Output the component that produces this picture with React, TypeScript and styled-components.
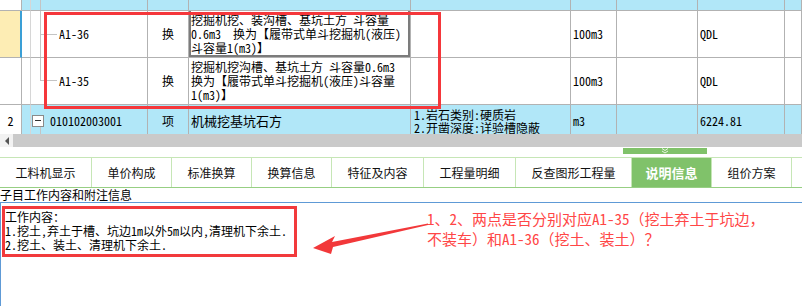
import React from "react";
import styled, { createGlobalStyle, css } from "styled-components";

const Global = createGlobalStyle`
  html, body { margin: 0; padding: 0; background: #fff; overflow: hidden; }
  body { font-family: "Noto Sans Mono CJK SC", "Noto Sans CJK SC", sans-serif; color: #000; }
`;

const Page = styled.div`
  position: relative;
  width: 802px;
  height: 306px;
  display: flex;
  flex-direction: column;
  overflow: hidden;
`;

const GridArea = styled.div`
  height: 134px;
  overflow: hidden;
  display: flex;
  flex-direction: column;
`;

const Row = styled.div<{ $h: number; $blue?: boolean }>`
  display: grid;
  grid-template-columns: 22px 9px 117px 41px 222px 160px 46px 81px 87px 1fr;
  height: ${(p) => p.$h}px;
  flex: none;
  background: ${(p) => (p.$blue ? "#b1e7f8" : "#fff")};
`;

const Cell = styled.div<{
  $bg?: string;
  $light?: boolean;
  $center?: boolean;
  $marker?: boolean;
  $selected?: boolean;
  $flush?: boolean;
  $top?: boolean;
}>`
  position: relative;
  box-sizing: border-box;
  border-right: 1px solid ${(p) => (p.$light ? "#d6d6d6" : "#b2b2b2")};
  border-bottom: 1px solid #b2b2b2;
  background: ${(p) => p.$bg || "transparent"};
  font-size: 12px;
  line-height: 14px;
  display: flex;
  align-items: center;
  padding-left: ${(p) => (p.$flush ? 0 : 2)}px;
  overflow: hidden;
  white-space: pre;
  ${(p) =>
    p.$top &&
    css`
      align-items: flex-start;
      padding-top: 3px;
      padding-left: 3px;
    `}
  ${(p) =>
    p.$center &&
    css`
      justify-content: center;
      padding-left: 0;
    `}
  ${(p) =>
    p.$marker &&
    css`
      border-right: 2px solid #3a9fd6;
    `}
  ${(p) =>
    p.$selected &&
    css`
      box-shadow: inset 2px 0 0 #7c7c7c, inset -2px 0 0 #7c7c7c, inset 0 -2px 0 #7c7c7c;
    `}
`;

const Lines = styled.div`
  display: flex;
  flex-direction: column;
  white-space: pre;
`;

const FeatureLine = styled.span`
  line-height: 13px;
`;

const CodeText = styled.span<{ $indent: number }>`
  padding-left: ${(p) => p.$indent}px;
`;

const NameText = styled.span<{ $size?: number }>`
  font-family: "Noto Sans CJK SC", sans-serif;
  font-size: ${(p) => p.$size || 12}px;
`;

/* decorative tree guide lines inside the code cell */
const TreeV = styled.span<{ $top: number; $bottom: number }>`
  position: absolute;
  left: 9px;
  top: ${(p) => p.$top}px;
  height: ${(p) => p.$bottom - p.$top}px;
  width: 1px;
  background: #c4c4c4;
`;

const TreeH = styled.span<{ $y: number }>`
  position: absolute;
  left: 10px;
  top: ${(p) => p.$y}px;
  width: 16px;
  height: 1px;
  background: #c4c4c4;
`;

const Toggle = styled.span`
  box-sizing: border-box;
  width: 12px;
  height: 12px;
  margin-left: 1px;
  margin-right: 6px;
  border: 1px solid #8a8a8a;
  background: #fff;
  display: inline-flex;
  align-items: center;
  justify-content: center;
  &::after {
    content: "";
    width: 6px;
    height: 1px;
    background: #333;
  }
`;

const Scrollbar = styled.div`
  height: 13px;
  flex: none;
  display: flex;
  background: #cacaca;
`;

const ScrollButton = styled.div`
  width: 13px;
  background: #f2f2f2;
  display: flex;
  align-items: center;
  justify-content: center;
  &::after {
    content: "";
    border-top: 4px solid transparent;
    border-bottom: 4px solid transparent;
    border-right: 4px solid #555;
  }
`;

const Splitter = styled.div`
  height: 10px;
  flex: none;
  padding-left: 623px;
`;

const SplitHandle = styled.div`
  width: 84px;
  height: 6px;
  margin-top: 1px;
  background: #80c26a;
  display: flex;
  justify-content: center;
  align-items: flex-start;
`;

const TabBar = styled.div`
  display: flex;
  height: 31px;
  flex: none;
  box-sizing: border-box;
  border-top: 1px solid #c6e6b6;
  border-bottom: 1px solid #97cf83;
`;

const Tab = styled.div<{ $w: number; $active?: boolean }>`
  box-sizing: border-box;
  width: ${(p) => p.$w}px;
  border-right: 1px solid #c6e6b6;
  display: flex;
  align-items: center;
  justify-content: center;
  font-family: "Noto Sans CJK SC", sans-serif;
  font-size: 12px;
  color: #111;
  ${(p) =>
    p.$active &&
    css`
      background: #80c26a;
      color: #fff;
      font-weight: 700;
      font-size: 13px;
    `}
`;

const PanelLabel = styled.div`
  height: 14px;
  flex: none;
  font-family: "Noto Sans CJK SC", sans-serif;
  font-size: 12px;
  line-height: 13px;
`;

const Panel = styled.div`
  flex: 1;
  border-top: 1px solid #5e9ad6;
  border-left: 1px solid #5e9ad6;
  display: flex;
  align-items: flex-start;
`;

const WorkBox = styled.div`
  margin: 3px 0 0 1px;
  width: 295px;
  box-sizing: border-box;
  border: 3px solid #f23a3c;
  padding: 1px 0 2px 0;
  font-family: "Noto Sans Mono CJK SC", "Noto Sans CJK SC", sans-serif;
  font-size: 12px;
  line-height: 14px;
  white-space: nowrap;
`;

const Note = styled.div`
  margin: 6px 0 0 130px;
  font-family: "Noto Sans Mono CJK SC", "Noto Sans CJK SC", sans-serif;
  font-size: 15px;
  line-height: 20px;
  color: #ff4646;
  white-space: nowrap;
`;

const HighlightBox = styled.div`
  position: absolute;
  left: 44px;
  top: 12px;
  width: 397px;
  height: 97px;
  box-sizing: border-box;
  border: 3px solid #f5373b;
  pointer-events: none;
`;

const ArrowSvg = styled.svg`
  position: absolute;
  left: 0;
  top: 0;
  pointer-events: none;
`;

type GridRow = {
  h: number;
  blue?: boolean;
  num?: string;
  numBg?: string;
  marker?: boolean;
  code?: React.ReactNode;
  type?: string;
  name?: string[];
  feature?: string[];
  unit?: string;
  src?: string;
  selected?: boolean;
};

const rows: GridRow[] = [
  { h: 11, blue: true, numBg: "#fff", code: <TreeV $top={0} $bottom={11} /> },
  {
    h: 47,
    numBg: "#fdedb4",
    marker: true,
    selected: true,
    code: (
      <>
        <TreeV $top={0} $bottom={47} />
        <TreeH $y={23} />
        <CodeText $indent={28}>A1-36</CodeText>
      </>
    ),
    type: "换",
    name: ["挖掘机挖、装沟槽、基坑土方 斗容量", "0.6m3  换为【履带式单斗挖掘机(液压)", "斗容量1(m3)】"],
    unit: "100m3",
    src: "QDL",
  },
  {
    h: 47,
    code: (
      <>
        <TreeV $top={0} $bottom={23} />
        <TreeH $y={22} />
        <CodeText $indent={28}>A1-35</CodeText>
      </>
    ),
    type: "换",
    name: ["挖掘机挖沟槽、基坑土方 斗容量0.6m3", "换为【履带式单斗挖掘机(液压)斗容量", "1(m3)】"],
    unit: "100m3",
    src: "QDL",
  },
  {
    h: 32,
    blue: true,
    num: "2",
    numBg: "#fff",
    code: (
      <>
        <TreeV $top={22} $bottom={32} />
        <Toggle />
        <span>010102003001</span>
      </>
    ),
    type: "项",
    name: ["机械挖基坑石方"],
    feature: ["1.岩石类别:硬质岩", "2.开凿深度:详验槽隐蔽"],
    unit: "m3",
    src: "6224.81",
  },
];

const tabs = [
  { t: "工料机显示", w: 92 },
  { t: "单价构成", w: 80 },
  { t: "标准换算", w: 80 },
  { t: "换算信息", w: 80 },
  { t: "特征及内容", w: 92 },
  { t: "工程量明细", w: 92 },
  { t: "反查图形工程量", w: 116 },
  { t: "说明信息", w: 80, active: true },
  { t: "组价方案", w: 80 },
];

export default function App() {
  return (
    <>
      <Global />
      <Page>
        <GridArea>
          {rows.map((r, i) => (
            <Row key={i} $h={r.h} $blue={r.blue}>
              <Cell $bg={r.numBg} $center $marker={r.marker}>
                {r.num}
              </Cell>
              <Cell $light />
              <Cell $flush>{r.code}</Cell>
              <Cell $center>
                <NameText>{r.type}</NameText>
              </Cell>
              <Cell $selected={r.selected}>
                {r.name && (
                  <Lines>
                    {r.name.map((l, j) =>
                      r.blue ? (
                        <NameText key={j} $size={13}>
                          {l}
                        </NameText>
                      ) : (
                        <span key={j}>{l}</span>
                      )
                    )}
                  </Lines>
                )}
              </Cell>
              <Cell $top>
                {r.feature && (
                  <Lines>
                    {r.feature.map((l, j) => (
                      <FeatureLine key={j}>{l}</FeatureLine>
                    ))}
                  </Lines>
                )}
              </Cell>
              <Cell>{r.unit}</Cell>
              <Cell />
              <Cell>{r.src}</Cell>
              <Cell />
            </Row>
          ))}
        </GridArea>
        <Scrollbar>
          <ScrollButton />
        </Scrollbar>
        <Splitter>
          <SplitHandle>
            <svg width="10" height="6" viewBox="0 0 10 6">
              <path d="M2 0.5 L5 2.5 L8 0.5 M2 3 L5 5 L8 3" stroke="#e8f5e2" strokeWidth="1" fill="none" />
            </svg>
          </SplitHandle>
        </Splitter>
        <TabBar>
          {tabs.map((t) => (
            <Tab key={t.t} $w={t.w} $active={t.active}>
              {t.t}
            </Tab>
          ))}
        </TabBar>
        <PanelLabel>子目工作内容和附注信息</PanelLabel>
        <Panel>
          <WorkBox>
            工作内容：
            <br />
            1.挖土,弃土于槽、坑边1m以外5m以内,清理机下余土.
            <br />
            2.挖土、装土、清理机下余土.
          </WorkBox>
          <Note>
            1、2、两点是否分别对应A1-35（挖土弃土于坑边，
            <br />
            不装车）和A1-36（挖土、装土）？
          </Note>
        </Panel>
        <HighlightBox />
        <ArrowSvg width="802" height="306" viewBox="0 0 802 306">
          <polygon
            points="313,248 335,236 332,242 428,223.5 428,225 333,247 331,254"
            fill="#f2383a"
          />
        </ArrowSvg>
      </Page>
    </>
  );
}
